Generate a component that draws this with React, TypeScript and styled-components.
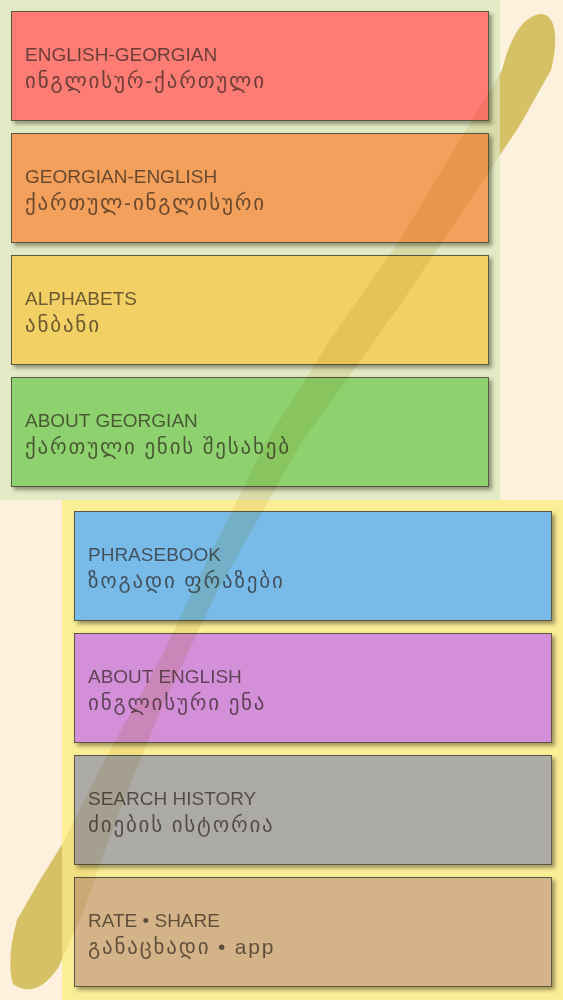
import React from 'react';
import styled, { createGlobalStyle } from 'styled-components';

const GlobalStyle = createGlobalStyle`
  html, body {
    margin: 0;
    padding: 0;
    background: #fdf0dc;
  }
  body {
    font-family: "Liberation Sans", "DejaVu Sans", sans-serif;
  }
`;

const Page = styled.div`
  position: relative;
  width: 563px;
  height: 1000px;
  overflow: hidden;
  display: flex;
  flex-direction: column;
`;

const Stroke = styled.svg<{ $over?: boolean }>`
  position: absolute;
  left: 0;
  top: 0;
  width: 563px;
  height: 1000px;
  pointer-events: none;
  z-index: ${(p) => (p.$over ? 3 : 0)};
  opacity: ${(p) => (p.$over ? 0.2 : 1)};
  mix-blend-mode: ${(p) => (p.$over ? 'multiply' : 'normal')};
`;

const Block = styled.section<{ $bg: string; $left: number; $width: number }>`
  position: relative;
  z-index: 1;
  box-sizing: border-box;
  margin-left: ${(p) => p.$left}px;
  width: ${(p) => p.$width}px;
  height: 500px;
  padding: 11px 0 0 ${(p) => (p.$left ? 12 : 11)}px;
  background: ${(p) => p.$bg};
  display: flex;
  flex-direction: column;
  gap: 12px;
`;

const Card = styled.div<{ $bg: string }>`
  box-sizing: border-box;
  width: 478px;
  height: 110px;
  padding: 4px 13px 0;
  border: 1px solid #5b5744;
  background: ${(p) => p.$bg};
  box-shadow: 3px 3px 4px rgba(40, 40, 20, 0.45);
  display: flex;
  flex-direction: column;
  justify-content: center;
  color: rgba(40, 30, 24, 0.68);
  font-size: 19px;
  line-height: 26px;
`;

const Title = styled.div`
  letter-spacing: 0;
`;

const Sub = styled.div`
  font-family: "Liberation Sans", "DejaVu Sans", sans-serif;
  font-size: 21px;
  letter-spacing: 1.8px;
`;

type Item = { en: string; ka: string; bg: string };

const top: Item[] = [
  { en: 'ENGLISH-GEORGIAN', ka: 'ინგლისურ-ქართული', bg: '#fe7b76' },
  { en: 'GEORGIAN-ENGLISH', ka: 'ქართულ-ინგლისური', bg: '#f2a05b' },
  { en: 'ALPHABETS', ka: 'ანბანი', bg: '#f2d064' },
  { en: 'ABOUT GEORGIAN', ka: 'ქართული ენის შესახებ', bg: '#8ed26f' },
];

const bottom: Item[] = [
  { en: 'PHRASEBOOK', ka: 'ზოგადი ფრაზები', bg: '#78bbe8' },
  { en: 'ABOUT ENGLISH', ka: 'ინგლისური ენა', bg: '#d48fd9' },
  { en: 'SEARCH HISTORY', ka: 'ძიების ისტორია', bg: '#acaaa6' },
  { en: 'RATE • SHARE', ka: 'განაცხადი • app', bg: '#d4b388' },
];

const bladePath =
  'M 540 14 C 556 14 559 38 551 70 L 520 125 L 470 200 L 400 305 L 300 445 ' +
  'L 218 590 L 165 700 L 132 780 L 105 850 L 82 915 L 58 968 ' +
  'Q 36 1000 13 984 Q 6 960 17 920 L 40 880 L 63 843 L 110 750 L 160 660 ' +
  'L 210 555 L 267 440 L 330 340 L 400 240 L 460 140 L 502 70 Q 515 18 540 14 Z';

const Blade = ({ over }: { over?: boolean }) => (
  <Stroke $over={over} viewBox="0 0 563 1000">
    <path d={bladePath} fill={over ? '#c4ac45' : '#e0ce78'} />
  </Stroke>
);

const Entry = ({ item }: { item: Item }) => (
  <Card $bg={item.bg}>
    <Title>{item.en}</Title>
    <Sub>{item.ka}</Sub>
  </Card>
);

export default function App() {
  return (
    <Page>
      <GlobalStyle />
      <Blade />
      <Block $bg="#e3eac6" $left={0} $width={500}>
        {top.map((i) => (
          <Entry key={i.en} item={i} />
        ))}
      </Block>
      <Block $bg="#fcee97" $left={62} $width={501}>
        {bottom.map((i) => (
          <Entry key={i.en} item={i} />
        ))}
      </Block>
      <Blade over />
    </Page>
  );
}
